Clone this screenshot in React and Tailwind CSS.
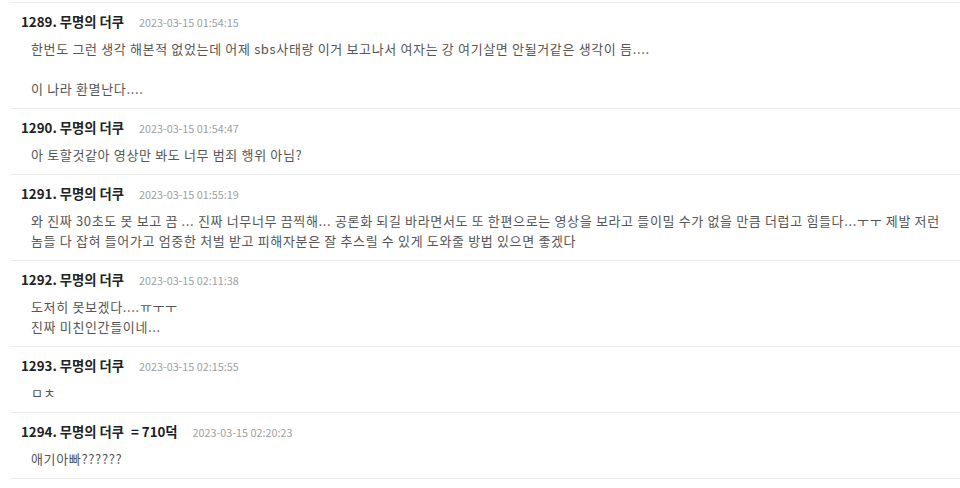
import React from 'react';

const posts = [
    {
        no: 1289,
        name: '무명의 더쿠',
        date: '2023-03-15 01:54:15',
        lines: ['한번도 그런 생각 해본적 없었는데 어제 sbs사태랑 이거 보고나서 여자는 강 여기살면 안될거같은 생각이 듬....', '', '이 나라 환멸난다....'],
    },
    {
        no: 1290,
        name: '무명의 더쿠',
        date: '2023-03-15 01:54:47',
        lines: ['아 토할것같아 영상만 봐도 너무 범죄 행위 아님?'],
    },
    {
        no: 1291,
        name: '무명의 더쿠',
        date: '2023-03-15 01:55:19',
        lines: ['와 진짜 30초도 못 보고 끔 ... 진짜 너무너무 끔찍해... 공론화 되길 바라면서도 또 한편으로는 영상을 보라고 들이밀 수가 없을 만큼 더럽고 힘들다...ㅜㅜ 제발 저런 놈들 다 잡혀 들어가고 엄중한 처벌 받고 피해자분은 잘 추스릴 수 있게 도와줄 방법 있으면 좋겠다'],
    },
    {
        no: 1292,
        name: '무명의 더쿠',
        date: '2023-03-15 02:11:38',
        lines: ['도저히 못보겠다....ㅠㅜㅜ', '진짜 미친인간들이네...'],
    },
    {
        no: 1293,
        name: '무명의 더쿠',
        date: '2023-03-15 02:15:55',
        lines: ['ㅁㅊ'],
    },
    {
        no: 1294,
        name: '무명의 더쿠',
        tag: '= 710덕',
        date: '2023-03-15 02:20:23',
        lines: ['애기아빠??????'],
    },
];

export default function App() {
    return (
        <div className="w-[960px] h-[488px] overflow-hidden bg-white pt-[2px] pl-[10px] font-['Malgun_Gothic','Noto_Sans_CJK_KR','Noto_Sans',sans-serif]">
            <ul>
                {posts.map(post => (
                    <li key={post.no} className="border-t border-[#ececec] pt-[9px] pb-[9px] last:border-b">
                        <div className="flex items-center h-[20px] pl-[11px]">
                            <span className="text-[13.3px] font-bold text-[#222]">
                                {post.no}. {post.name}
                                {post.tag && <span className="ml-[7px] text-[#1a1a2e]">{post.tag}</span>}
                            </span>
                            <span className="ml-[15px] text-[10.8px] text-[#a0a0a0]">{post.date}</span>
                        </div>
                        <div className="mt-[7px] pl-[21px] pr-[8px] text-[13px] tracking-[0.65px] leading-[20px] text-[#555]">
                            {post.lines.map((line, i) => (
                                <p key={i} className="min-h-[20px]">{line}</p>
                            ))}
                        </div>
                    </li>
                ))}
            </ul>
        </div>
    );
}
